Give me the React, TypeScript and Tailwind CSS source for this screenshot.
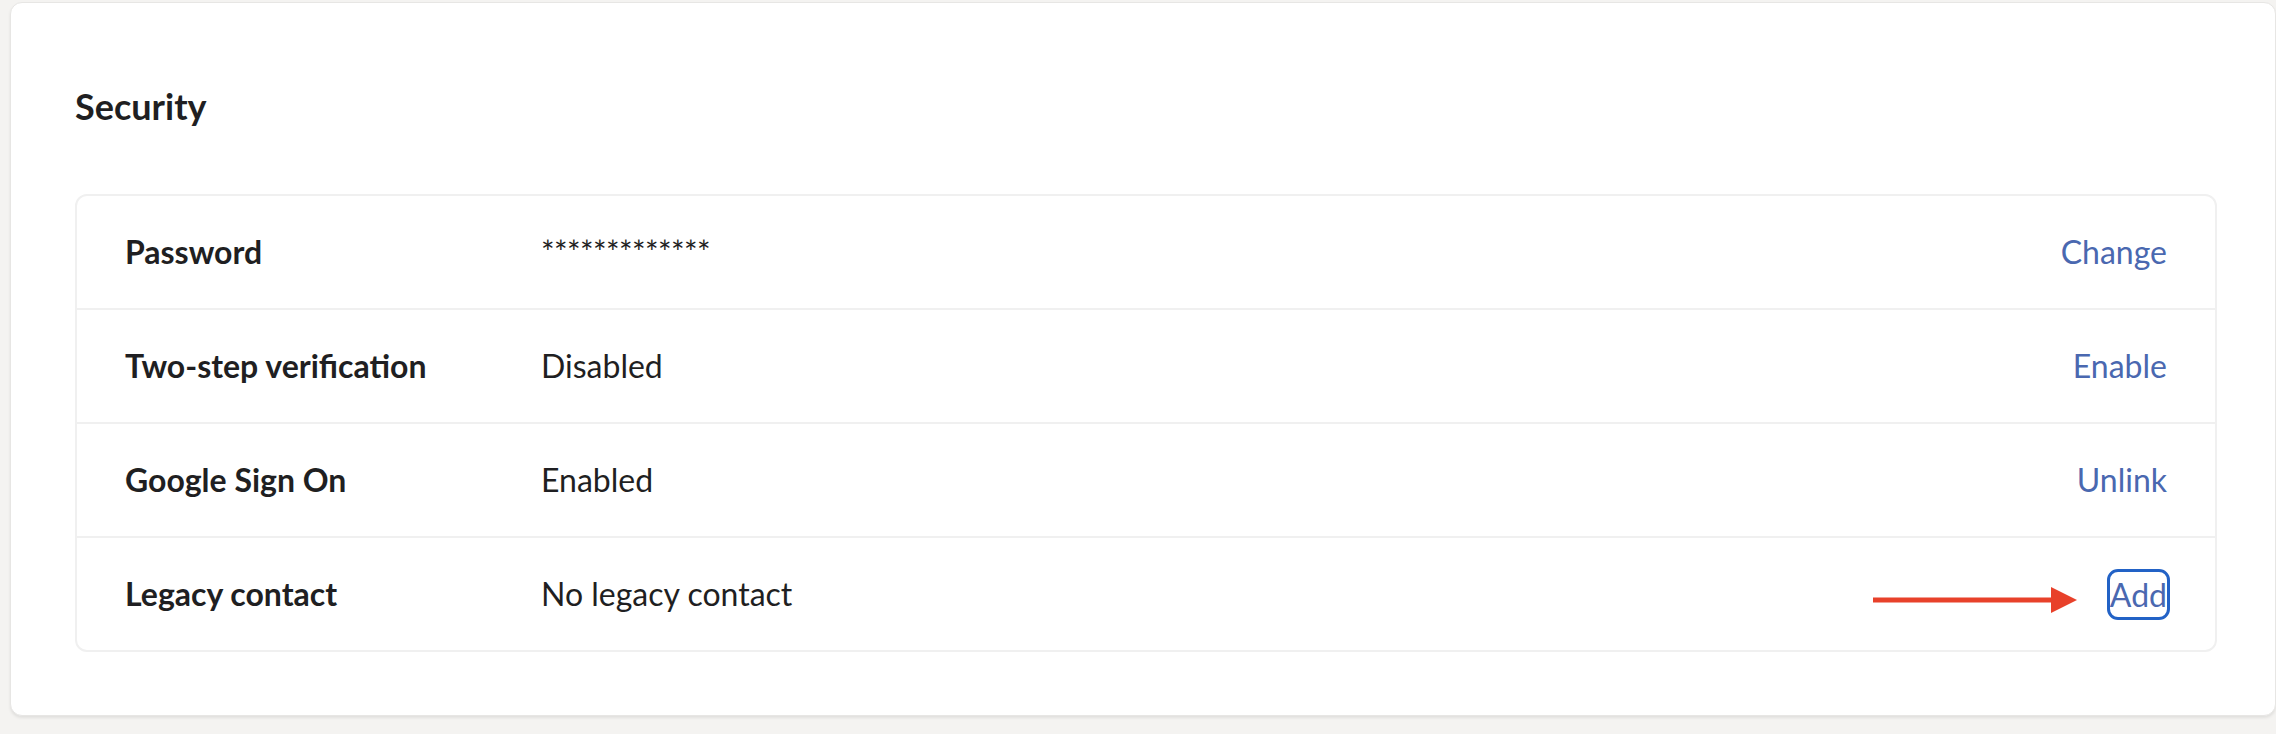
import React from "react";

const rows = [
  { label: "Password", value: "*************", action: "Change" },
  { label: "Two-step verification", value: "Disabled", action: "Enable" },
  { label: "Google Sign On", value: "Enabled", action: "Unlink" },
  { label: "Legacy contact", value: "No legacy contact", action: "Add", focus: true },
];

function Arrow() {
  return (
    <svg width="205" height="26" viewBox="0 0 205 26" className="mt-[12px] shrink-0">
      <line x1="0" y1="13" x2="182" y2="13" stroke="#e8412a" strokeWidth="5" />
      <polygon points="178,0 204,13 178,26" fill="#e8412a" />
    </svg>
  );
}

export default function App() {
  return (
    <div
      className="w-[2276px] h-[734px] bg-[#f4f3f1] pt-[2px] pl-[10px] overflow-hidden"
      style={{ fontFamily: "Lato, 'Noto Sans', sans-serif" }}
    >
      <div className="w-[2266px] h-[714px] bg-white border border-[#e7e6e4] rounded-[12px] shadow-[0_2px_3px_rgba(0,0,0,0.08)] pl-[64px] pr-[58px] pt-[81px]">
        <h2 className="text-[36px] leading-[44px] font-bold text-[#1f1f22]">Security</h2>
        <div className="mt-[66px] border-2 border-[#f0f0f0] rounded-[12px]">
          {rows.map((r, i) => (
            <div
              key={r.label}
              className={`flex items-center px-[48px] ${
                i < rows.length - 1 ? "h-[114px] border-b-2 border-[#f0f0f0]" : "h-[112px]"
              }`}
            >
              <div className="w-[416px] text-[32px] leading-[40px] font-bold text-[#1f1f22]">{r.label}</div>
              <div
                className={`flex-1 text-[32px] leading-[40px] text-[#1f1f22] ${
                  i === 0 ? "tracking-[-0.6px]" : ""
                }`}
              >
                {r.value}
              </div>
              {r.focus ? (
                <div className="flex items-center gap-[32px]">
                  <Arrow />
                  <span className="inline-block text-[32px] leading-[45px] text-[#4a68b0] outline-[3px] outline-solid outline-[#2262c6] rounded-[8px]">
                    {r.action}
                  </span>
                </div>
              ) : (
                <span className="text-[32px] leading-[40px] text-[#4a68b0]">{r.action}</span>
              )}
            </div>
          ))}
        </div>
      </div>
    </div>
  );
}
